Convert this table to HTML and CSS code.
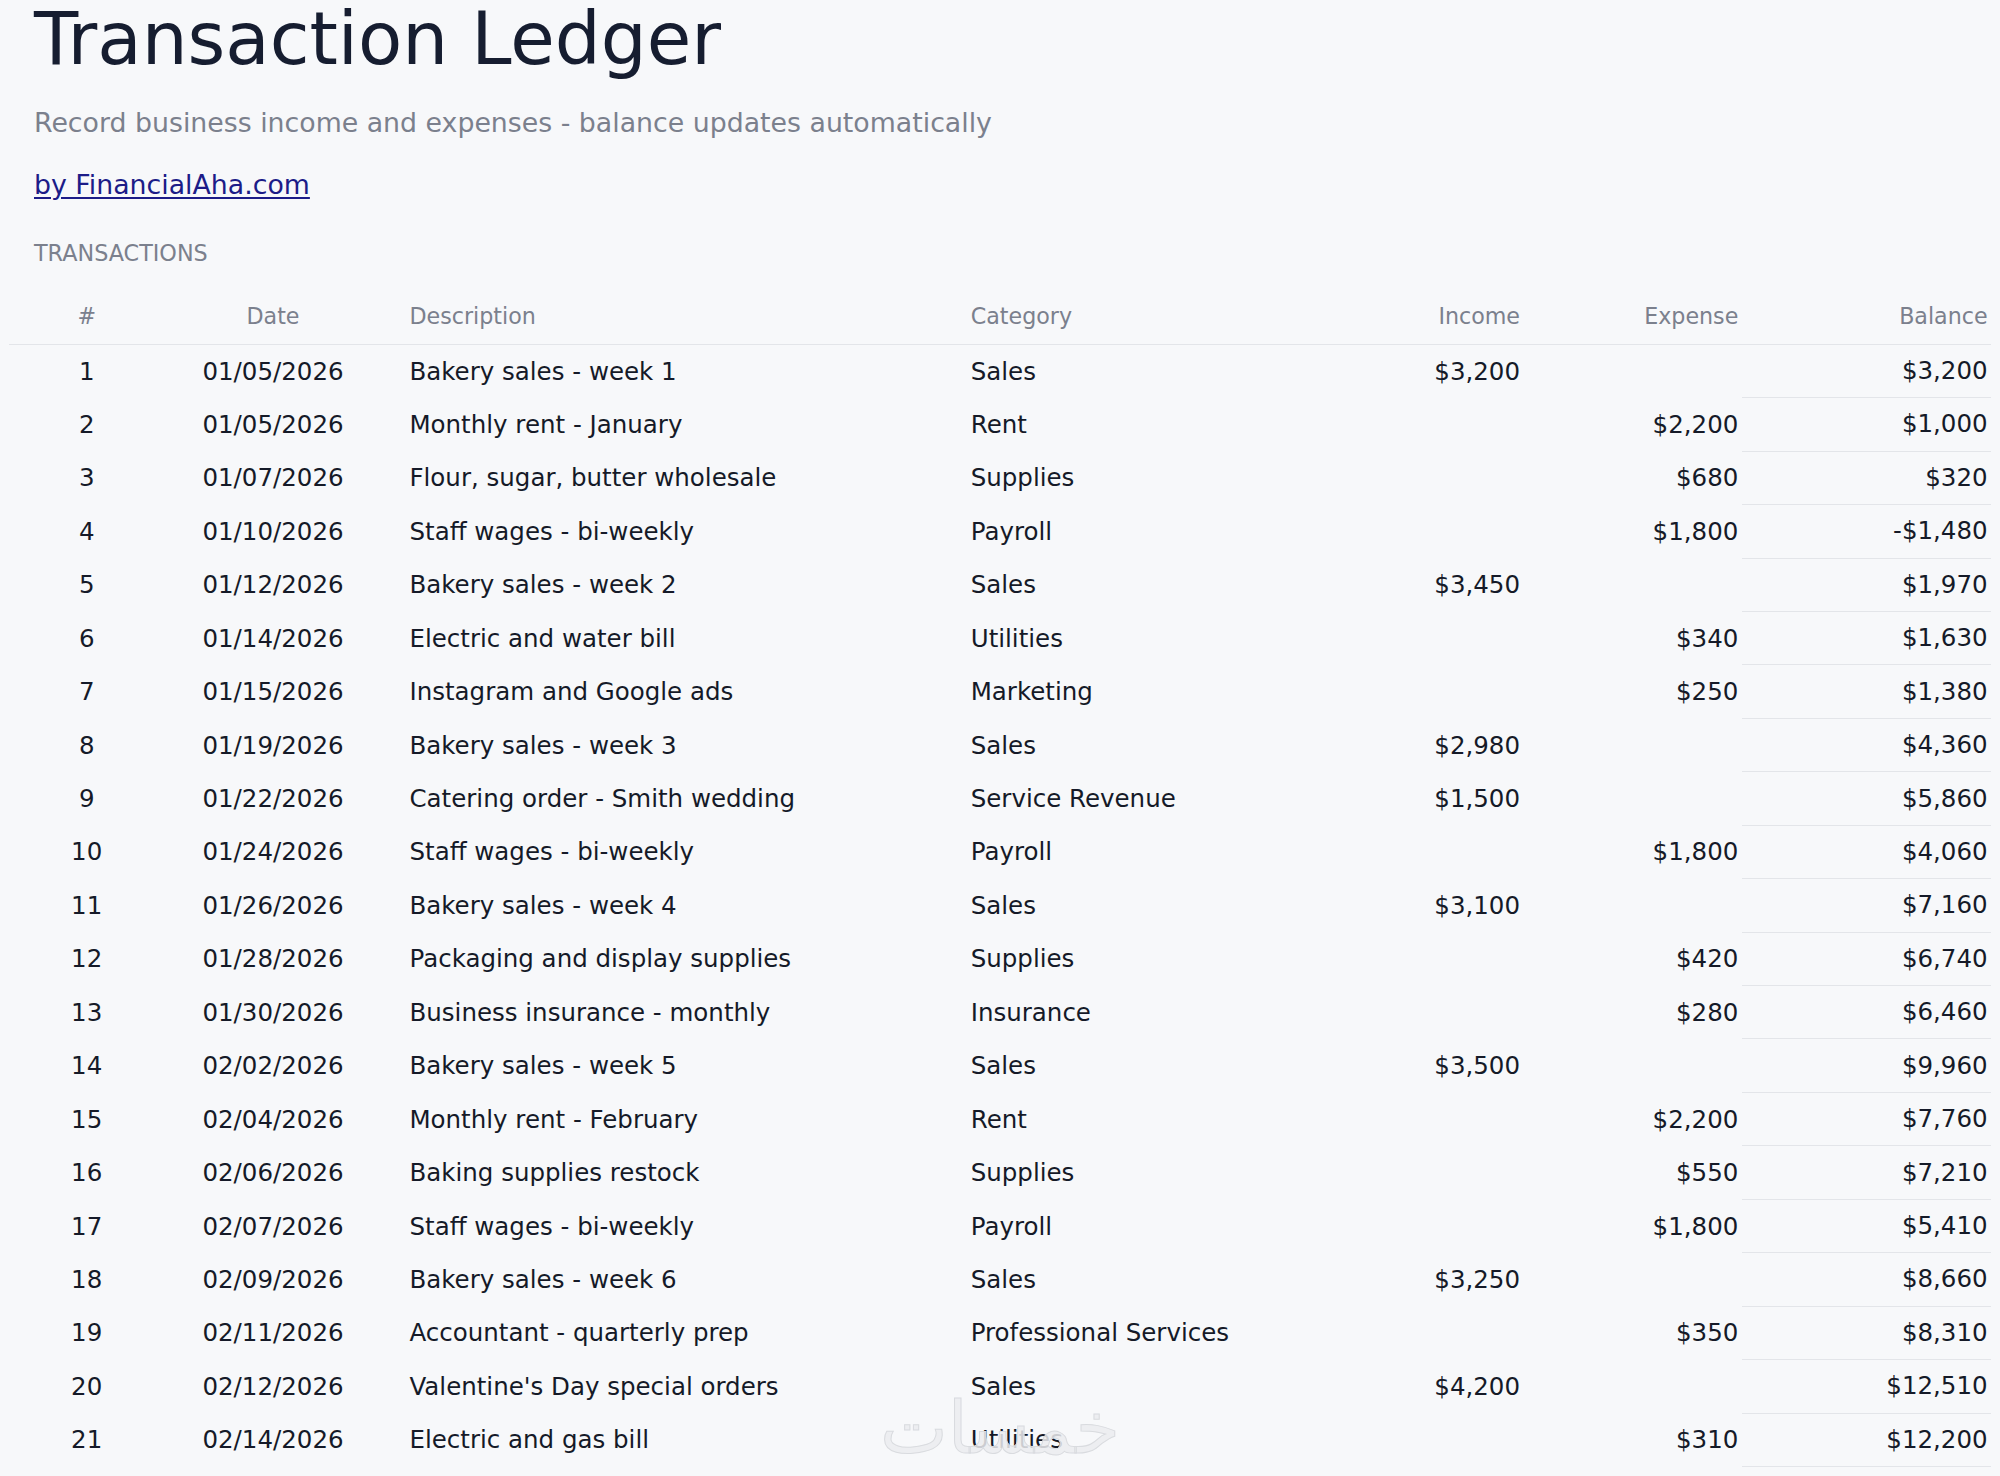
FILE: index.html
```html
<!DOCTYPE html>
<html lang="en">
<head>
<meta charset="utf-8">
<title>Transaction Ledger</title>
<link rel="stylesheet" href="styles.css">
</head>
<body>
<div class="page">
  <header class="intro">
    <h1 class="title">Transaction Ledger</h1>
    <p class="subtitle">Record business income and expenses - balance updates automatically</p>
    <p class="byline"><a class="brand-link" href="#">by FinancialAha.com</a></p>
    <h2 class="section-label">TRANSACTIONS</h2>
  </header>

  <div class="ledger" role="table">
    <div class="row head" role="row">
      <div class="c num">#</div>
      <div class="c date">Date</div>
      <div class="c desc">Description</div>
      <div class="c cat">Category</div>
      <div class="c amt">Income</div>
      <div class="c amt">Expense</div>
      <div class="c bal">Balance</div>
    </div>

    <div class="row" role="row"><div class="c num">1</div><div class="c date">01/05/2026</div><div class="c desc">Bakery sales - week 1</div><div class="c cat">Sales</div><div class="c amt">$3,200</div><div class="c amt"></div><div class="c bal">$3,200</div></div>
    <div class="row" role="row"><div class="c num">2</div><div class="c date">01/05/2026</div><div class="c desc">Monthly rent - January</div><div class="c cat">Rent</div><div class="c amt"></div><div class="c amt">$2,200</div><div class="c bal">$1,000</div></div>
    <div class="row" role="row"><div class="c num">3</div><div class="c date">01/07/2026</div><div class="c desc">Flour, sugar, butter wholesale</div><div class="c cat">Supplies</div><div class="c amt"></div><div class="c amt">$680</div><div class="c bal">$320</div></div>
    <div class="row" role="row"><div class="c num">4</div><div class="c date">01/10/2026</div><div class="c desc">Staff wages - bi-weekly</div><div class="c cat">Payroll</div><div class="c amt"></div><div class="c amt">$1,800</div><div class="c bal">-$1,480</div></div>
    <div class="row" role="row"><div class="c num">5</div><div class="c date">01/12/2026</div><div class="c desc">Bakery sales - week 2</div><div class="c cat">Sales</div><div class="c amt">$3,450</div><div class="c amt"></div><div class="c bal">$1,970</div></div>
    <div class="row" role="row"><div class="c num">6</div><div class="c date">01/14/2026</div><div class="c desc">Electric and water bill</div><div class="c cat">Utilities</div><div class="c amt"></div><div class="c amt">$340</div><div class="c bal">$1,630</div></div>
    <div class="row" role="row"><div class="c num">7</div><div class="c date">01/15/2026</div><div class="c desc">Instagram and Google ads</div><div class="c cat">Marketing</div><div class="c amt"></div><div class="c amt">$250</div><div class="c bal">$1,380</div></div>
    <div class="row" role="row"><div class="c num">8</div><div class="c date">01/19/2026</div><div class="c desc">Bakery sales - week 3</div><div class="c cat">Sales</div><div class="c amt">$2,980</div><div class="c amt"></div><div class="c bal">$4,360</div></div>
    <div class="row" role="row"><div class="c num">9</div><div class="c date">01/22/2026</div><div class="c desc">Catering order - Smith wedding</div><div class="c cat">Service Revenue</div><div class="c amt">$1,500</div><div class="c amt"></div><div class="c bal">$5,860</div></div>
    <div class="row" role="row"><div class="c num">10</div><div class="c date">01/24/2026</div><div class="c desc">Staff wages - bi-weekly</div><div class="c cat">Payroll</div><div class="c amt"></div><div class="c amt">$1,800</div><div class="c bal">$4,060</div></div>
    <div class="row" role="row"><div class="c num">11</div><div class="c date">01/26/2026</div><div class="c desc">Bakery sales - week 4</div><div class="c cat">Sales</div><div class="c amt">$3,100</div><div class="c amt"></div><div class="c bal">$7,160</div></div>
    <div class="row" role="row"><div class="c num">12</div><div class="c date">01/28/2026</div><div class="c desc">Packaging and display supplies</div><div class="c cat">Supplies</div><div class="c amt"></div><div class="c amt">$420</div><div class="c bal">$6,740</div></div>
    <div class="row" role="row"><div class="c num">13</div><div class="c date">01/30/2026</div><div class="c desc">Business insurance - monthly</div><div class="c cat">Insurance</div><div class="c amt"></div><div class="c amt">$280</div><div class="c bal">$6,460</div></div>
    <div class="row" role="row"><div class="c num">14</div><div class="c date">02/02/2026</div><div class="c desc">Bakery sales - week 5</div><div class="c cat">Sales</div><div class="c amt">$3,500</div><div class="c amt"></div><div class="c bal">$9,960</div></div>
    <div class="row" role="row"><div class="c num">15</div><div class="c date">02/04/2026</div><div class="c desc">Monthly rent - February</div><div class="c cat">Rent</div><div class="c amt"></div><div class="c amt">$2,200</div><div class="c bal">$7,760</div></div>
    <div class="row" role="row"><div class="c num">16</div><div class="c date">02/06/2026</div><div class="c desc">Baking supplies restock</div><div class="c cat">Supplies</div><div class="c amt"></div><div class="c amt">$550</div><div class="c bal">$7,210</div></div>
    <div class="row" role="row"><div class="c num">17</div><div class="c date">02/07/2026</div><div class="c desc">Staff wages - bi-weekly</div><div class="c cat">Payroll</div><div class="c amt"></div><div class="c amt">$1,800</div><div class="c bal">$5,410</div></div>
    <div class="row" role="row"><div class="c num">18</div><div class="c date">02/09/2026</div><div class="c desc">Bakery sales - week 6</div><div class="c cat">Sales</div><div class="c amt">$3,250</div><div class="c amt"></div><div class="c bal">$8,660</div></div>
    <div class="row" role="row"><div class="c num">19</div><div class="c date">02/11/2026</div><div class="c desc">Accountant - quarterly prep</div><div class="c cat">Professional Services</div><div class="c amt"></div><div class="c amt">$350</div><div class="c bal">$8,310</div></div>
    <div class="row" role="row"><div class="c num">20</div><div class="c date">02/12/2026</div><div class="c desc">Valentine's Day special orders</div><div class="c cat">Sales</div><div class="c amt">$4,200</div><div class="c amt"></div><div class="c bal">$12,510</div></div>
    <div class="row" role="row"><div class="c num">21</div><div class="c date">02/14/2026</div><div class="c desc">Electric and gas bill</div><div class="c cat">Utilities</div><div class="c amt"></div><div class="c amt">$310</div><div class="c bal">$12,200</div></div>
  </div>

  <div class="watermark" aria-hidden="true">خمسات</div>
</div>
</body>
</html>
```

FILE: styles.css
```css
* { box-sizing: border-box; }

html, body {
  margin: 0;
  padding: 0;
  background: #f7f8fa;
}

body {
  font-family: "DejaVu Sans", "Liberation Sans", sans-serif;
  color: #151a28;
}

.page {
  position: relative;
  padding: 0 9px;
  overflow: hidden;
  height: 1476px;
}

.intro {
  padding-left: 25px;
}

.title {
  margin: 0;
  font-size: 72.4px;
  font-weight: 400;
  line-height: 79px;
  color: #161d30;
}

.subtitle {
  margin: 27.5px 0 0;
  font-size: 26.77px;
  line-height: 32px;
  color: #7b808d;
}

.byline {
  margin: 30.5px 0 0;
  font-size: 26.77px;
  line-height: 32px;
}

.brand-link {
  color: #1c1c88;
  text-decoration: underline;
  text-decoration-thickness: 2px;
  text-underline-offset: 3px;
}

.section-label {
  margin: 39.3px 0 0;
  font-size: 22.3px;
  font-weight: 400;
  line-height: 26px;
  color: #7b808d;
}

.ledger {
  margin-top: 21.3px;
}

.row {
  display: grid;
  grid-template-columns: 155.4px 217.2px 585.8px 300px 256px 218.3px 249.3px;
  height: 53.45px;
  align-items: center;
  font-size: 24.5px;
  line-height: 28px;
}

.row.head {
  height: 57.2px;
  align-items: end;
  padding-bottom: 15.2px;
  border-bottom: 1.33px solid #e3e5e9;
  font-size: 22.2px;
  line-height: 26px;
  color: #7b808d;
}

.c {
  padding: 0 3.35px;
  white-space: nowrap;
}

.num, .date { text-align: center; }
.desc { padding-left: 27.9px; }
.amt, .bal { text-align: right; }

.row:not(.head) .bal {
  align-self: stretch;
  display: flex;
  align-items: center;
  justify-content: flex-end;
  border-bottom: 1.33px solid #e3e5e9;
}

.watermark {
  position: absolute;
  left: 880px;
  top: 1383px;
  font-family: "DejaVu Sans", sans-serif;
  font-size: 72px;
  line-height: 90px;
  color: rgba(235, 236, 239, 0.85);
  -webkit-text-stroke: 1px #d9dbdf;
  pointer-events: none;
}
```
